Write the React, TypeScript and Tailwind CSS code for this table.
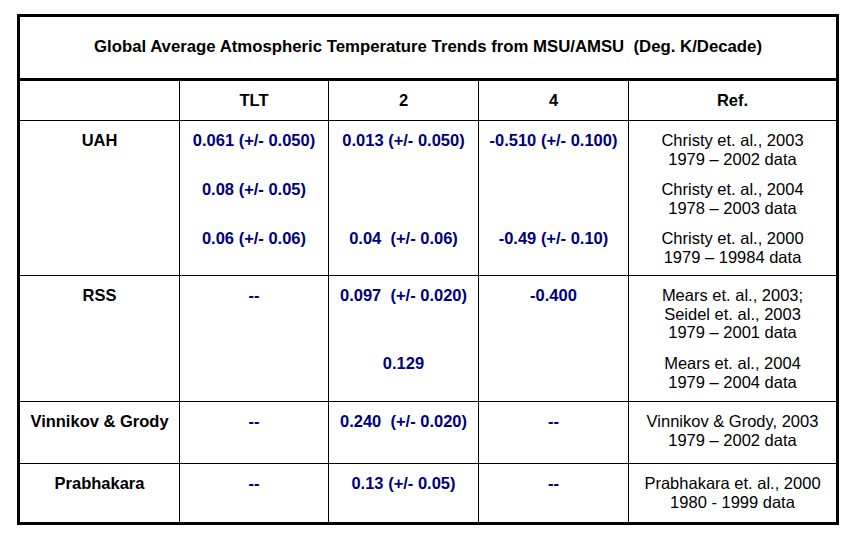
const font = { fontFamily: '"Liberation Sans", Arial, sans-serif' }

type SubRow = {
  tlt: string
  t2: string
  t4: string
  ref: string[]
  h: string
}

type Group = {
  name: string
  h: string
  rows: SubRow[]
}

const groups: Group[] = [
  {
    name: "UAH",
    h: "h-[155px]",
    rows: [
      { tlt: "0.061 (+/- 0.050)", t2: "0.013 (+/- 0.050)", t4: "-0.510 (+/- 0.100)", ref: ["Christy et. al., 2003", "1979 – 2002 data"], h: "h-[59px]" },
      { tlt: "0.08 (+/- 0.05)", t2: "", t4: "", ref: ["Christy et. al., 2004", "1978 – 2003 data"], h: "h-[49px]" },
      { tlt: "0.06 (+/- 0.06)", t2: "0.04  (+/- 0.06)", t4: "-0.49 (+/- 0.10)", ref: ["Christy et. al., 2000", "1979 – 19984 data"], h: "flex-1" },
    ],
  },
  {
    name: "RSS",
    h: "h-[126px]",
    rows: [
      { tlt: "--", t2: "0.097  (+/- 0.020)", t4: "-0.400", ref: ["Mears et. al., 2003;", "Seidel et. al., 2003", "1979 – 2001 data"], h: "h-[78px]" },
      { tlt: "", t2: "0.129", t4: "", ref: ["Mears et. al., 2004", "1979 – 2004 data"], h: "flex-1" },
    ],
  },
  {
    name: "Vinnikov & Grody",
    h: "h-[62px]",
    rows: [
      { tlt: "--", t2: "0.240  (+/- 0.020)", t4: "--", ref: ["Vinnikov & Grody, 2003", "1979 – 2002 data"], h: "flex-1" },
    ],
  },
  {
    name: "Prabhakara",
    h: "h-[58px]",
    rows: [
      { tlt: "--", t2: "0.13 (+/- 0.05)", t4: "--", ref: ["Prabhakara et. al., 2000", "1980 - 1999 data"], h: "flex-1" },
    ],
  },
]

function DataCell({ value, w, top }: { value: string; w: string; top: boolean }) {
  return (
    <div
      className={`${w} shrink-0 border-l border-black text-center font-bold text-[#000080] whitespace-pre ${top ? "pt-[10px]" : ""}`}
    >
      {value}
    </div>
  )
}

export default function App() {
  return (
    <div className="w-[858px] h-[549px] bg-white pt-[14px] pl-[17px]" style={font}>
      <div className="w-[822px] border-[3px] border-black text-[16.5px] leading-[18.7px] text-black">
        {/* title */}
        <div className="h-[64px] flex items-center justify-center font-bold text-[16.75px] whitespace-pre border-b-[3px] border-black">
          Global Average Atmospheric Temperature Trends from MSU/AMSU  (Deg. K/Decade)
        </div>

        {/* header */}
        <div className="flex h-[40px] border-b border-black font-bold">
          <div className="w-[159px] shrink-0" />
          <div className="w-[149px] shrink-0 border-l border-black flex items-center justify-center">TLT</div>
          <div className="w-[150px] shrink-0 border-l border-black flex items-center justify-center">2</div>
          <div className="w-[150px] shrink-0 border-l border-black flex items-center justify-center">4</div>
          <div className="flex-1 border-l border-black flex items-center justify-center">Ref.</div>
        </div>

        {groups.map((g, gi) => (
          <div
            key={g.name}
            className={`flex ${g.h} ${gi < groups.length - 1 ? "border-b border-black" : ""}`}
          >
            <div className="w-[159px] shrink-0 pt-[10px] text-center font-bold">{g.name}</div>
            <div className="flex-1 flex flex-col">
              {g.rows.map((r, ri) => (
                <div key={ri} className={`flex ${r.h}`}>
                  <DataCell value={r.tlt} w="w-[149px]" top={ri === 0} />
                  <DataCell value={r.t2} w="w-[150px]" top={ri === 0} />
                  <DataCell value={r.t4} w="w-[150px]" top={ri === 0} />
                  <div className={`flex-1 border-l border-black text-center ${ri === 0 ? "pt-[10px]" : ""}`}>
                    {r.ref.map((line) => (
                      <div key={line}>{line}</div>
                    ))}
                  </div>
                </div>
              ))}
            </div>
          </div>
        ))}
      </div>
    </div>
  )
}
